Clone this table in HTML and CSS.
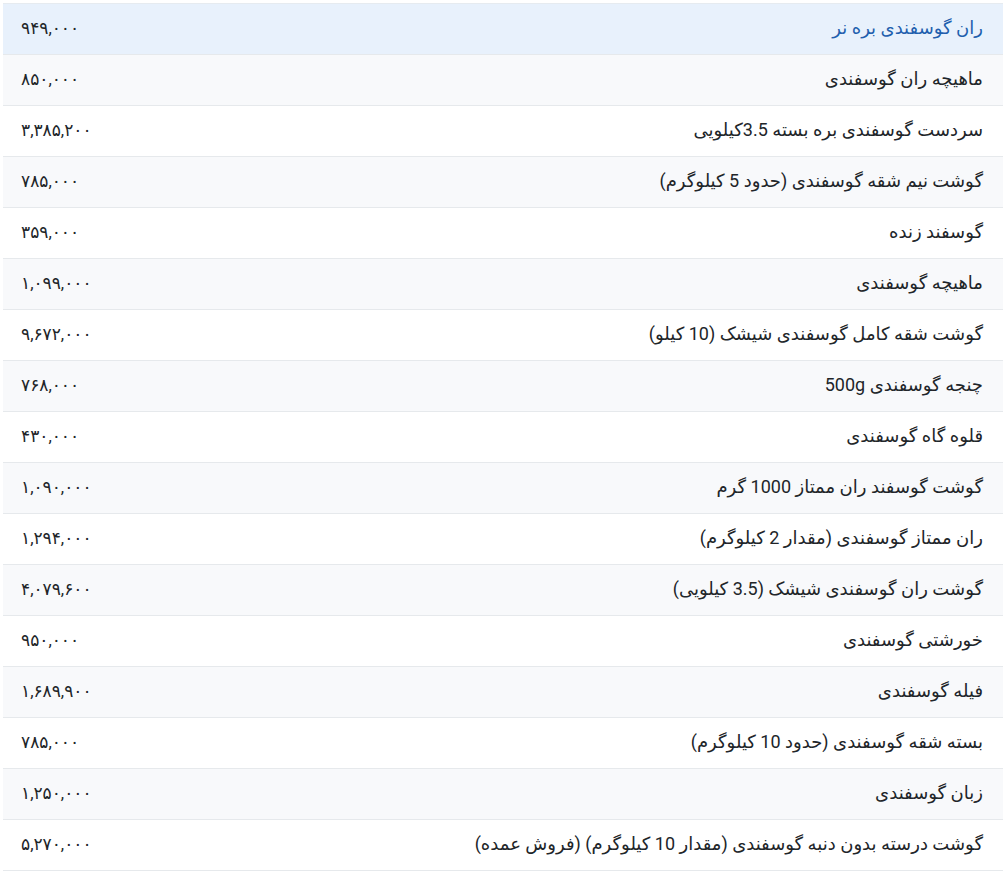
FILE: index.html
```html
<!DOCTYPE html>
<html lang="fa" dir="rtl">
<head>
<meta charset="utf-8">
<link rel="stylesheet" href="styles.css">
</head>
<body>
<table class="prices">
<tbody>
<tr class="active"><td class="name">ران گوسفندی بره نر</td><td class="price">۹۴۹,۰۰۰</td></tr>
<tr><td class="name">ماهیچه ران گوسفندی</td><td class="price">۸۵۰,۰۰۰</td></tr>
<tr><td class="name">سردست گوسفندی بره بسته 3.5کیلویی</td><td class="price">۳,۳۸۵,۲۰۰</td></tr>
<tr><td class="name">گوشت نیم شقه گوسفندی (حدود 5 کیلوگرم)</td><td class="price">۷۸۵,۰۰۰</td></tr>
<tr><td class="name">گوسفند زنده</td><td class="price">۳۵۹,۰۰۰</td></tr>
<tr><td class="name">ماهیچه گوسفندی</td><td class="price">۱,۰۹۹,۰۰۰</td></tr>
<tr><td class="name">گوشت شقه کامل گوسفندی شیشک (10 کیلو)</td><td class="price">۹,۶۷۲,۰۰۰</td></tr>
<tr><td class="name">چنجه گوسفندی 500g</td><td class="price">۷۶۸,۰۰۰</td></tr>
<tr><td class="name">قلوه گاه گوسفندی</td><td class="price">۴۳۰,۰۰۰</td></tr>
<tr><td class="name">گوشت گوسفند ران ممتاز 1000 گرم</td><td class="price">۱,۰۹۰,۰۰۰</td></tr>
<tr><td class="name">ران ممتاز گوسفندی (مقدار 2 کیلوگرم)</td><td class="price">۱,۲۹۴,۰۰۰</td></tr>
<tr><td class="name">گوشت ران گوسفندی شیشک (3.5 کیلویی)</td><td class="price">۴,۰۷۹,۶۰۰</td></tr>
<tr><td class="name">خورشتی گوسفندی</td><td class="price">۹۵۰,۰۰۰</td></tr>
<tr><td class="name">فیله گوسفندی</td><td class="price">۱,۶۸۹,۹۰۰</td></tr>
<tr><td class="name">بسته شقه گوسفندی (حدود 10 کیلوگرم)</td><td class="price">۷۸۵,۰۰۰</td></tr>
<tr><td class="name">زبان گوسفندی</td><td class="price">۱,۲۵۰,۰۰۰</td></tr>
<tr><td class="name">گوشت درسته بدون دنبه گوسفندی (مقدار 10 کیلوگرم) (فروش عمده)</td><td class="price">۵,۲۷۰,۰۰۰</td></tr>
</tbody>
</table>
</body>
</html>
```
FILE: styles.css
```css
html, body {
  margin: 0;
  padding: 0;
  background: #ffffff;
}
body {
  padding-top: 3px;
  font-family: "Roboto", "DejaVu Sans", sans-serif;
  font-size: 18px;
  color: #212529;
}
.prices {
  width: 1000px;
  border-collapse: collapse;
  border-top: 1px solid #e6ebf0;
}
.prices tr {
  height: 51px;
  border-bottom: 1px solid #e6e9ec;
}
.prices tr:nth-child(even) {
  background: #f8f9fb;
}
.prices tr.active {
  background: #e8f1fc;
}
.prices tr.active .name {
  color: #1f5fae;
}
.prices td {
  padding: 0 20px 3px 18px;
  vertical-align: middle;
  white-space: nowrap;
}
.name {
  text-align: right;
}
.price {
  text-align: left;
  width: 1%;
  font-size: 17px;
}
```
